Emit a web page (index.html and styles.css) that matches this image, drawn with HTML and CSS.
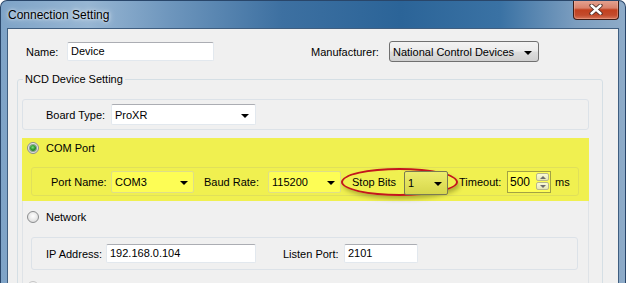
FILE: index.html
```html
<!DOCTYPE html>
<html lang="en">
<head>
    <meta charset="UTF-8">
    <title>Connection Setting</title>
    <link rel="stylesheet" href="styles.css">
</head>
<body>
    <div class="window">
        <div class="titlebar">
            <span class="title">Connection Setting</span>
            <div class="close-btn">
                <svg width="14" height="11" viewBox="0 0 14 11">
                    <path d="M2.5 1.5 L11.5 9.5 M11.5 1.5 L2.5 9.5" stroke="#4b2a25" stroke-width="4.2" stroke-linecap="round"/>
                    <path d="M2.5 1.5 L11.5 9.5 M11.5 1.5 L2.5 9.5" stroke="#ffffff" stroke-width="2.4" stroke-linecap="round"/>
                </svg>
            </div>
        </div>
        <div class="client">
            <div class="top-row">
                <span class="lbl lbl-name">Name:</span>
                <div class="textbox tb-name">Device</div>
                <span class="lbl lbl-manu">Manufacturer:</span>
                <div class="combo combo-btn combo-manu"><span>National Control Devices</span><span class="arrow"></span></div>
            </div>

            <fieldset class="group">
                <legend>NCD Device Setting</legend>

                <div class="panel board-panel">
                    <span class="lbl lbl-board">Board Type:</span>
                    <div class="combo combo-board"><span>ProXR</span><span class="arrow"></span></div>
                </div>

                <div class="highlight">
                    <div class="radio-row"><span class="radio checked"></span>COM Port</div>
                    <div class="panel com-panel">
                        <span class="lbl lbl-port">Port Name:</span>
                        <div class="combo combo-yellow combo-port"><span>COM3</span><span class="arrow"></span></div>
                        <span class="lbl lbl-baud">Baud Rate:</span>
                        <div class="combo combo-yellow combo-baud"><span>115200</span><span class="arrow"></span></div>
                        <div class="stop-ring">
                            <span class="lbl lbl-stop">Stop Bits</span>
                            <div class="combo combo-stop"><span>1</span><span class="arrow"></span></div>
                        </div>
                        <span class="lbl lbl-timeout">Timeout:</span>
                        <div class="numeric">
                            <span class="num-value">500</span>
                            <div class="spinner">
                                <span class="spin-btn"><span class="tri-up"></span></span>
                                <span class="spin-btn"><span class="tri-down"></span></span>
                            </div>
                        </div>
                        <span class="lbl lbl-ms">ms</span>
                    </div>
                </div>

                <div class="lower">
                    <div class="radio-row"><span class="radio"></span>Network</div>
                    <div class="panel net-panel">
                        <span class="lbl lbl-ip">IP Address:</span>
                        <div class="textbox tb-ip">192.168.0.104</div>
                        <span class="lbl lbl-listen">Listen Port:</span>
                        <div class="textbox tb-listen">2101</div>
                    </div>
                    <div class="radio-row disabled"><span class="radio"></span>Discovered Network Devices</div>
                </div>
            </fieldset>
        </div>
    </div>
</body>
</html>
```

FILE: styles.css
```css
body {
    margin: 0;
    background-color: #ffffff;
    font-family: "Liberation Sans", Arial, sans-serif;
    font-size: 11px;
    color: #000000;
}
.window {
    width: 626px;
    height: 283px;
    box-sizing: border-box;
    border: 1px solid #29466a;
    border-bottom: none;
    border-radius: 7px 7px 0 0;
    padding: 0 6px;
    display: flex;
    flex-direction: column;
    overflow: hidden;
    background: linear-gradient(90deg, #7ea3c7 0%, #97b6d3 14%, #6e96bd 27%, #3d70a1 45%, #2b6498 64%, #3a72a4 80%, #7b9dbf 92%, #8eabc8 100%);
}
.titlebar {
    height: 27px;
    display: flex;
    align-items: flex-start;
}
.title {
    margin-top: 7px;
    margin-left: 1px;
    font-size: 12px;
    text-shadow: 0 0 6px rgba(255, 255, 255, 0.9), 0 0 3px rgba(255, 255, 255, 0.7);
}
.close-btn {
    margin-left: auto;
    margin-top: -1px;
    width: 46px;
    height: 20px;
    box-sizing: border-box;
    border: 1px solid #3e1c16;
    border-top: none;
    border-radius: 0 0 4px 4px;
    background: linear-gradient(#e6a594 0%, #d9826c 42%, #c2401f 52%, #c34b2c 80%, #d6765b 100%);
    box-shadow: inset 0 0 0 1px rgba(255, 200, 180, 0.35);
    display: flex;
    align-items: center;
    justify-content: center;
}
.client {
    flex: 1;
    background-color: #f0f0f0;
    border: 1px solid #3f5e80;
    border-bottom: none;
    padding-top: 12px;
    overflow: hidden;
}
.lbl {
    white-space: nowrap;
    flex-shrink: 0;
}
.top-row {
    display: flex;
    align-items: center;
    height: 21px;
}
.lbl-name {
    width: 41px;
    margin-left: 18px;
}
.textbox {
    box-sizing: border-box;
    height: 19px;
    background-color: #ffffff;
    border: 1px solid #e2e8ee;
    border-top-color: #abadb3;
    border-radius: 2px;
    padding-left: 3px;
    line-height: 17px;
    flex-shrink: 0;
}
.tb-name {
    width: 147px;
}
.lbl-manu {
    width: 78px;
    margin-left: 97px;
}
.combo {
    box-sizing: border-box;
    display: flex;
    align-items: center;
    justify-content: space-between;
    padding: 0 5px 0 3px;
    flex-shrink: 0;
    background-color: #ffffff;
    border: 1px solid #e2e8ee;
    border-top-color: #abadb3;
    border-radius: 2px;
}
.arrow {
    width: 0;
    height: 0;
    border-left: 4px solid transparent;
    border-right: 4px solid transparent;
    border-top: 4px solid #000000;
    margin-top: 2px;
}
.combo-btn {
    background: linear-gradient(#f3f3f3 0%, #ebebeb 48%, #dddddd 52%, #d0d0d0 100%);
    border: 1px solid #707070;
    border-radius: 3px;
}
.combo-manu {
    width: 150px;
    height: 21px;
    padding-right: 6px;
}
.group {
    margin: 11px 15px 0 9px;
    padding: 0 13px 40px 4px;
    border: 1px solid #d5dfe5;
    border-radius: 3px;
}
.group legend {
    margin-left: 1px;
    padding: 0 2px;
    line-height: 13px;
}
.panel {
    box-sizing: border-box;
    display: flex;
    align-items: center;
    border: 1px solid #dce2e8;
    border-radius: 3px;
}
.board-panel {
    margin-top: 13px;
    height: 31px;
    padding-left: 23px;
}
.lbl-board {
    width: 65px;
}
.combo-board {
    width: 145px;
    height: 21px;
    padding-right: 6px;
}
.highlight {
    margin-top: 8px;
    height: 63px;
    box-sizing: border-box;
    padding: 3px 0 5px;
    background-color: #f0f050;
}
.radio-row {
    display: flex;
    align-items: center;
    height: 13px;
    padding-left: 5px;
    gap: 7px;
}
.radio {
    position: relative;
    width: 12px;
    height: 12px;
    box-sizing: border-box;
    border-radius: 50%;
    border: 1px solid #8b8d8f;
    background: radial-gradient(circle at 50% 40%, #ffffff 0%, #e6e6e6 60%, #cfcfcf 100%);
}
.radio.checked::after {
    content: "";
    position: absolute;
    left: 2px;
    top: 2px;
    width: 6px;
    height: 6px;
    border-radius: 50%;
    background: radial-gradient(circle at 45% 40%, #7ee07e 0%, #2f9a2f 45%, #14531a 100%);
    box-shadow: 0 0 0 1px rgba(40, 90, 40, 0.5);
}
.com-panel {
    margin: 13px 10px 0 9px;
    height: 29px;
    padding-left: 19px;
    border-color: #e0e05a;
}
.lbl-port {
    width: 60px;
}
.combo-yellow {
    height: 22px;
    background-color: #fdfd55;
    border: 1px solid #dede88;
}
.combo-port {
    width: 83px;
}
.lbl-baud {
    width: 64px;
    margin-left: 10px;
}
.combo-baud {
    width: 73px;
}
.stop-ring {
    box-sizing: border-box;
    width: 117px;
    height: 28px;
    display: flex;
    align-items: center;
    flex-shrink: 0;
    padding-left: 9px;
    border: 2px solid #c3161d;
    border-radius: 50%;
    box-shadow: 2px 3px 4px rgba(60, 60, 0, 0.35);
}
.lbl-stop {
    width: 52px;
}
.combo-stop {
    width: 44px;
    height: 24px;
    margin-top: 2px;
    background: linear-gradient(#ecec6e 0%, #e2e25c 50%, #d6d64c 100%);
    border: 1px solid #7a7a52;
}
.lbl-timeout {
    width: 48px;
    margin-left: 1px;
}
.numeric {
    box-sizing: border-box;
    width: 44px;
    height: 22px;
    display: flex;
    align-items: center;
    justify-content: space-between;
    background-color: #fdfd55;
    border: 1px solid #a2a244;
    padding: 0 1px 0 2px;
    flex-shrink: 0;
}
.num-value {
    font-size: 12px;
}
.spinner {
    display: flex;
    flex-direction: column;
    gap: 1px;
}
.spin-btn {
    width: 13px;
    height: 8px;
    box-sizing: border-box;
    display: flex;
    align-items: center;
    justify-content: center;
    border: 1px solid #b8b88a;
    border-radius: 2px;
    background: linear-gradient(#fbfbd8, #e6e6b4);
}
.tri-up, .tri-down {
    width: 0;
    height: 0;
    border-left: 3px solid transparent;
    border-right: 3px solid transparent;
}
.tri-up {
    border-bottom: 3px solid #6d6d6d;
}
.tri-down {
    border-top: 3px solid #6d6d6d;
}
.lbl-ms {
    margin-left: 4px;
}
.lower {
    border-left: 1px solid #dfe3e7;
    border-right: 1px solid #dfe3e7;
    padding-top: 9px;
    padding-bottom: 20px;
}
.lower .radio-row {
    padding-left: 4px;
}
.net-panel {
    margin: 14px 10px 0 8px;
    height: 33px;
    padding-left: 14px;
}
.lbl-ip {
    width: 60px;
}
.tb-ip {
    width: 150px;
}
.lbl-listen {
    width: 61px;
    margin-left: 27px;
}
.tb-listen {
    width: 74px;
}
.radio-row.disabled {
    margin-top: 10px;
    color: #a0a0a0;
}
.radio-row.disabled .radio {
    border-color: #c5c5c5;
    background: #f4f4f4;
}
```
